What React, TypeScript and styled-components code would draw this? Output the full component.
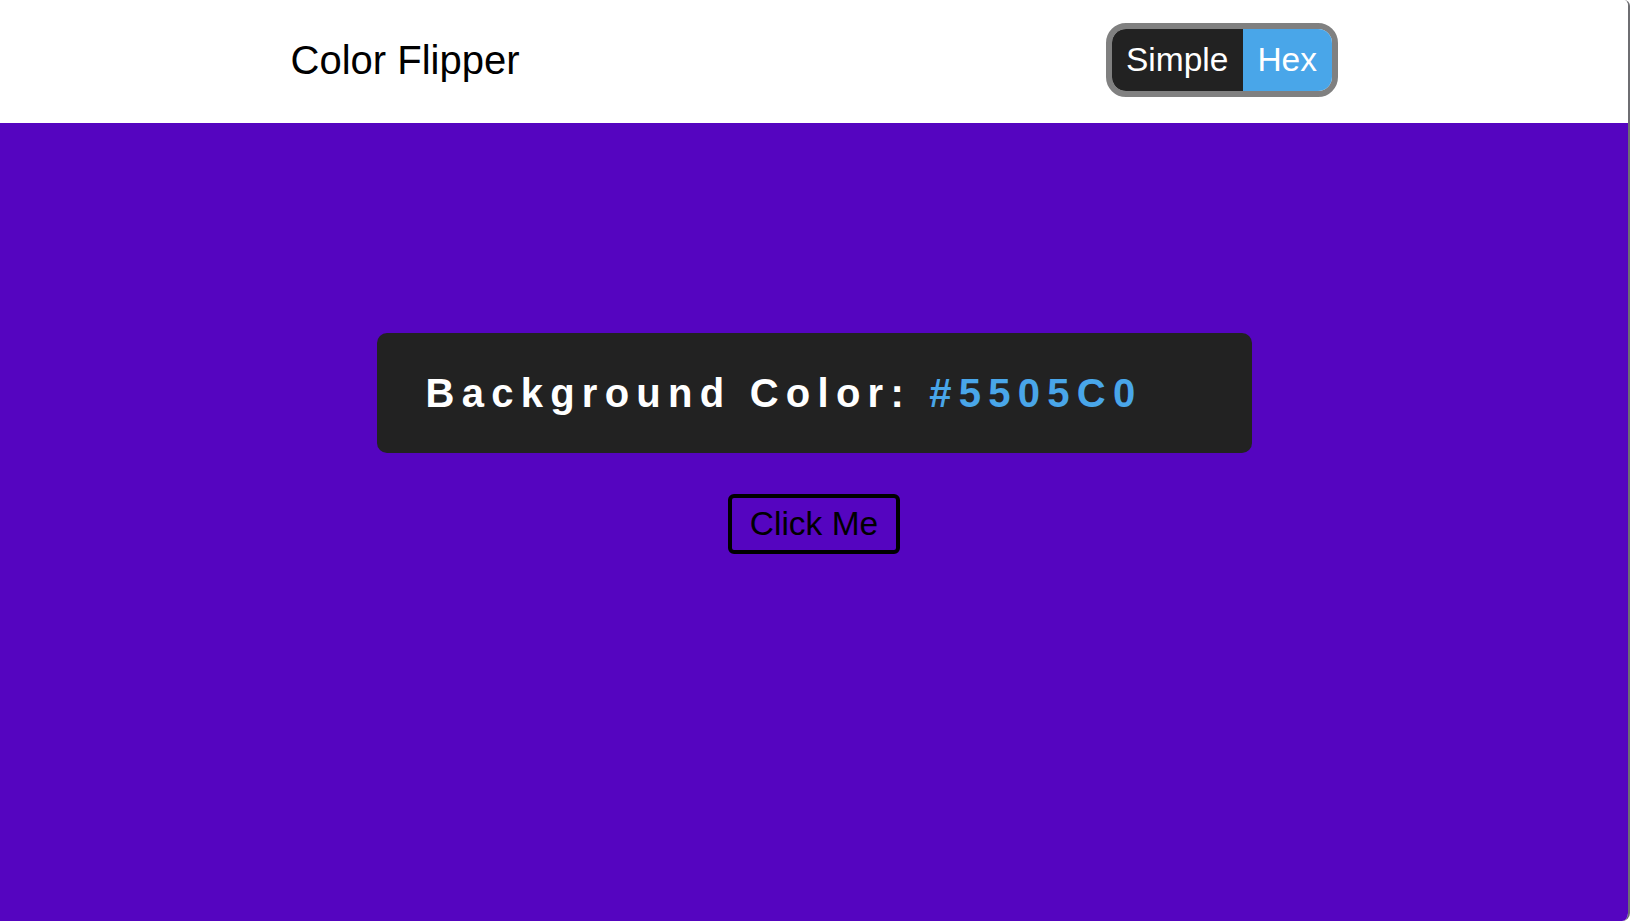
import React, { useState } from "react";
import styled, { createGlobalStyle } from "styled-components";

const GlobalStyle = createGlobalStyle`
  html, body {
    margin: 0;
    padding: 0;
    background: #ffffff;
  }
  body {
    font-family: "Liberation Sans", Arial, sans-serif;
  }
  * { box-sizing: border-box; }
`;

const Frame = styled.div`
  display: flex;
  flex-direction: column;
  height: 100vh;
  margin-right: 1px;
  border-right: 2px solid #6e6e72;
  border-radius: 0 6px 8px 0;
  overflow: hidden;
`;

const Header = styled.header`
  height: 123px;
  flex: none;
  background: #ffffff;
  padding-bottom: 3px;
  display: flex;
  align-items: center;
`;

const HeaderInner = styled.div`
  width: 1047px;
  margin: 0 auto;
  display: flex;
  align-items: center;
  justify-content: space-between;
`;

const Title = styled.h1`
  margin: 0;
  font-size: 40px;
  font-weight: 400;
  color: #000000;
`;

const Toggle = styled.div`
  display: flex;
  border: 6px solid #808080;
  border-radius: 20px;
  overflow: hidden;
`;

const ToggleOption = styled.button<{ $active: boolean }>`
  height: 62px;
  padding: 0 14.5px;
  border: none;
  margin: 0;
  display: flex;
  align-items: center;
  font-family: "Liberation Sans", Arial, sans-serif;
  font-size: 33.5px;
  color: #ffffff;
  background: ${(p) => (p.$active ? "#49a6e9" : "#222222")};
  cursor: pointer;
`;

const Main = styled.main<{ $bg: string }>`
  flex: 1;
  background: ${(p) => p.$bg};
  display: flex;
  flex-direction: column;
  align-items: center;
  padding-top: 210px;
`;

const Card = styled.div`
  width: 875px;
  height: 120px;
  background: #222222;
  border-radius: 10px;
  padding: 0 48px 0 49px;
  display: flex;
  align-items: center;
`;

const CardText = styled.h2`
  margin: 0;
  font-size: 40px;
  font-weight: 700;
  letter-spacing: 7.25px;
  color: #ffffff;
  white-space: nowrap;
`;

const HexValue = styled.span`
  color: #49a6e9;
`;

const ClickButton = styled.button`
  margin-top: 41px;
  padding: 7px 18px;
  font-family: "Liberation Sans", Arial, sans-serif;
  font-size: 33.5px;
  color: #000000;
  background: transparent;
  border: 4px solid #000000;
  border-radius: 6px;
  cursor: pointer;
`;

const hexChars = "0123456789ABCDEF";
const simpleColors = ["#5505C0", "#F15025", "#2E8B57", "#1E90FF"];

export default function App() {
  const [mode, setMode] = useState<"simple" | "hex">("hex");
  const [color, setColor] = useState("#5505C0");

  const flip = () => {
    if (mode === "hex") {
      let c = "#";
      for (let i = 0; i < 6; i++) c += hexChars[Math.floor(Math.random() * 16)];
      setColor(c);
    } else {
      setColor(simpleColors[Math.floor(Math.random() * simpleColors.length)]);
    }
  };

  return (
    <>
      <GlobalStyle />
      <Frame>
        <Header>
          <HeaderInner>
            <Title>Color Flipper</Title>
            <Toggle>
              <ToggleOption $active={mode === "simple"} onClick={() => setMode("simple")}>
                Simple
              </ToggleOption>
              <ToggleOption $active={mode === "hex"} onClick={() => setMode("hex")}>
                Hex
              </ToggleOption>
            </Toggle>
          </HeaderInner>
        </Header>
        <Main $bg={color}>
          <Card>
            <CardText>
              Background Color: <HexValue>{color}</HexValue>
            </CardText>
          </Card>
          <ClickButton onClick={flip}>Click Me</ClickButton>
        </Main>
      </Frame>
    </>
  );
}
